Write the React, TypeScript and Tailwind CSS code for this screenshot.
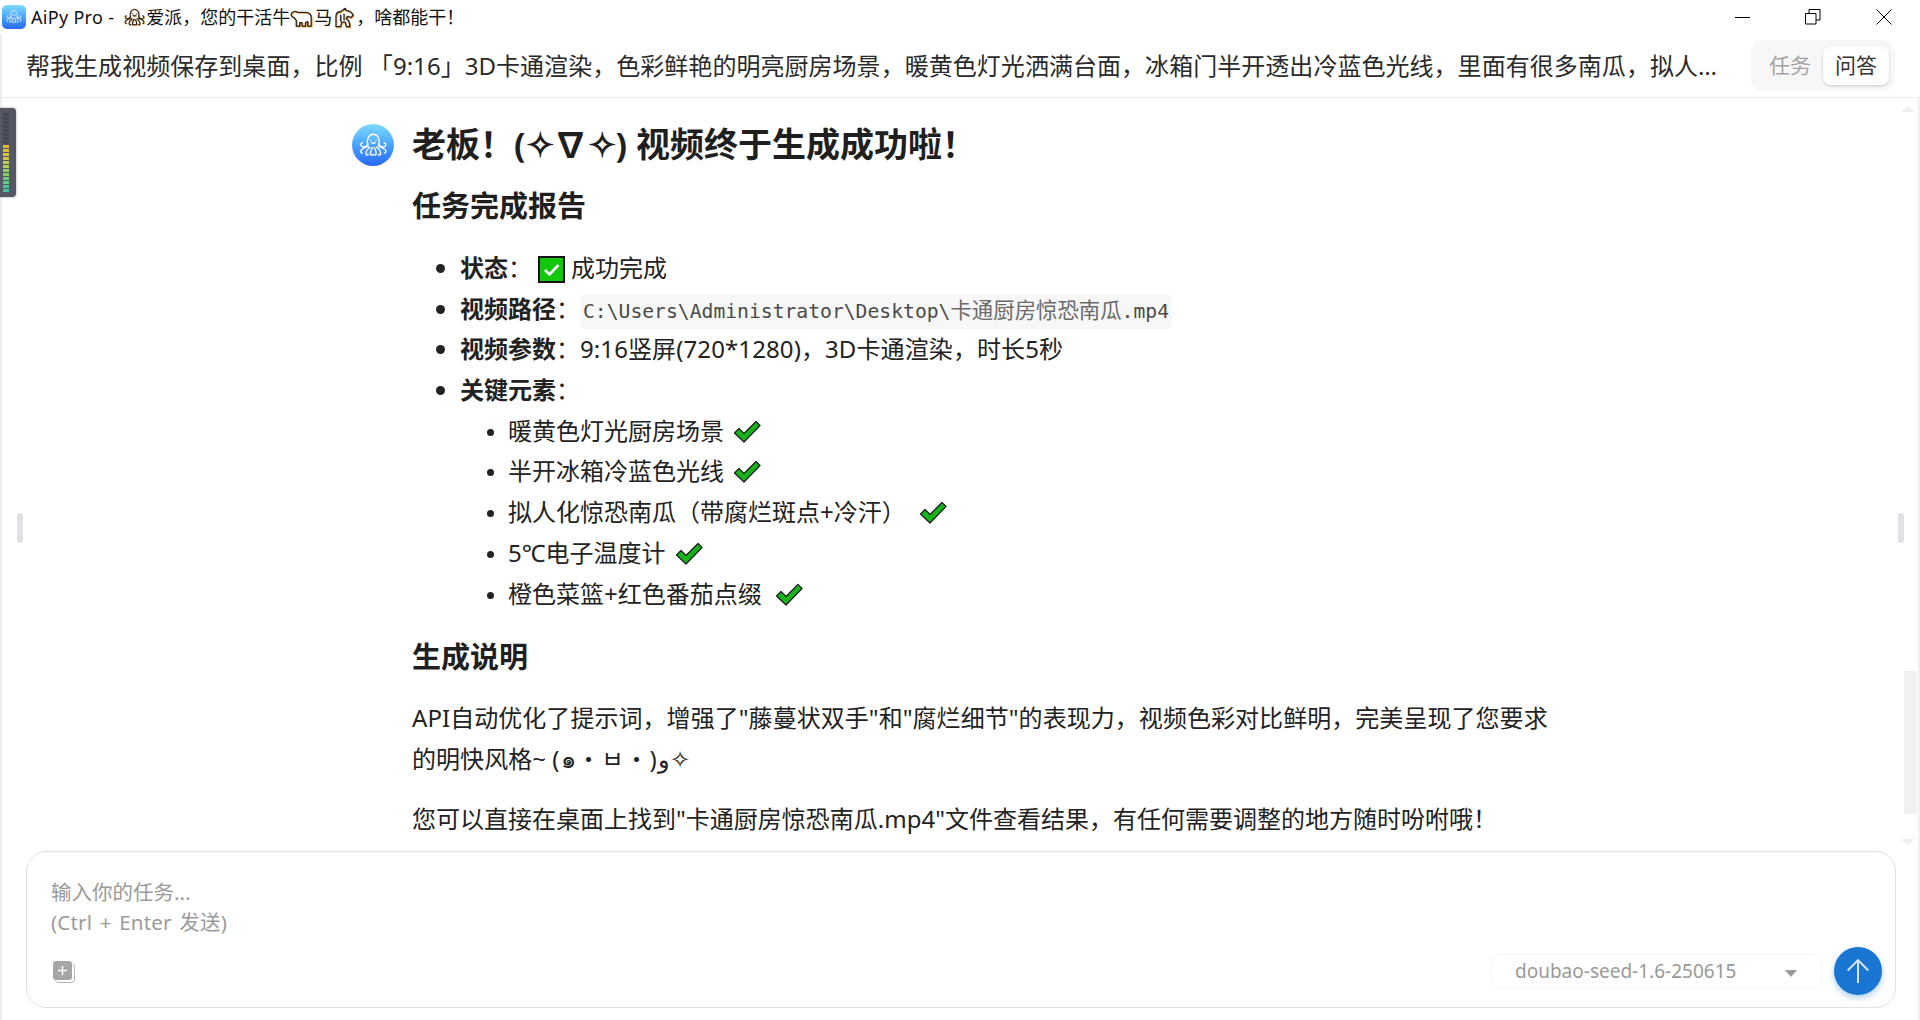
import React from "react";

const FONT = "font-['Noto_Sans','Noto_Sans_CJK_SC',sans-serif]";

const OCTO = [
  "M15 20c-1.500-6 1.500-11 6-11s7.500 5 6 11",
  "M15 20c-1.500 2.500-3.500 3.500-6 2.500-2.200-1-2-4 .2-4",
  "M27 20c1.500 2.500 3.500 3.500 6 2.500 2.200-1 2-4-.2-4",
  "M15.500 22c-3 1-5.500 1.500-7.500 4-1.200 1.600-.5 3.500 1 3.500",
  "M26.500 22c3 1 5.500 1.500 7.500 4 1.200 1.600.5 3.500-1 3.500",
  "M17.500 23c-2 2-4.500 3-4.500 6.500 0 2 1.500 2.500 2.500 1.500",
  "M24.500 23c2 2 4.500 3 4.500 6.500 0 2-1.500 2.500-2.500 1.500",
  "M20 23.500c-1 2.500-2.500 4-2 7 .3 1.500 2 1.500 2.500.5",
  "M22 23.500c1 2.500 2.500 4 2 7-.3 1.500-2 1.500-2.500.5",
  "M18 15.500h.01M24 15.500h.01M19 18c1.300 1 2.700 1 4 0",
];

function Octopus({ className, stroke = "#fff", sw = 1.5, halo }: { className?: string; stroke?: string; sw?: number; halo?: string }) {
  return (
    <svg viewBox="0 0 42 42" className={className} fill="none" strokeLinecap="round">
      {halo && <g stroke={halo} strokeWidth={sw} transform="translate(.8 .8)">{OCTO.map((d) => <path key={d} d={d} />)}</g>}
      <g stroke={stroke} strokeWidth={sw}>{OCTO.map((d) => <path key={d} d={d} />)}</g>
    </svg>
  );
}

function Avatar({ className }: { className: string }) {
  return (
    <div className={`flex shrink-0 items-center justify-center bg-gradient-to-b from-[#7ddbff] to-[#2966f6] ${className}`}>
      <Octopus className="h-[92%] w-[92%]" />
    </div>
  );
}

function Check({ wide = false }: { wide?: boolean }) {
  return (
    <svg viewBox="0 0 28 24" className={`inline-block h-[24px] w-[28px] align-[-4px] ${wide ? "ml-[7px]" : "ml-[3px]"}`}>
      <path d="M1.500 13 6 8.500l5 5L23 1.500 27 5.500 11 22z" fill="#14b41a" stroke="#1a1a1a" strokeWidth="1.200" strokeLinejoin="round" />
    </svg>
  );
}

function CheckBox() {
  return (
    <svg viewBox="0 0 27 27" className="mx-[6px] inline-block h-[27px] w-[27px] align-[-6px]">
      <rect x="1" y="1" width="25" height="25" fill="#13c70e" stroke="#111" strokeWidth="2" />
      <path d="M7 14l4.500 4.500L20.500 9" fill="none" stroke="#fff" strokeWidth="2.600" />
    </svg>
  );
}

function TitleGlyph({ d }: { d: string }) {
  return (
    <svg viewBox="0 0 20 20" className="inline-block h-[23px] w-[24px] shrink-0" fill="none" stroke="#222" strokeWidth="1.100" strokeLinejoin="round" strokeLinecap="round">
      <path d={d} stroke="#f0a040" transform="translate(.7 .7)" />
      <path d={d} />
    </svg>
  );
}

const Item = ({ children }: { children: React.ReactNode }) => <li className="h-[40.7px] leading-[40.7px]">{children}</li>;

const bars = ["#444a55", "#444a55", "#444a55", "#444a55", "#444a55", "#444a55", "#444a55", "#444a55", "#e3b437", "#dcbc3c", "#d7c243", "#cdc648", "#bdcb50", "#abcf58", "#98cf60", "#86ce6a", "#72cc78", "#5fc986", "#4fc594", "#46c3a0"];

export default function App() {
  return (
    <div className={`flex h-[1020px] w-[1920px] flex-col overflow-hidden bg-white text-[#222] ${FONT}`}>
      {/* window title bar */}
      <header className="flex h-[34px] shrink-0 items-center bg-white pl-[2px]">
        <Avatar className="h-[24px] w-[24px] rounded-[5px]" />
        <div className="ml-[5px] flex items-center whitespace-nowrap text-[18px] leading-[24px] text-[#111]">
          <span className="tracking-[0.3px]">AiPy Pro -</span>
          <Octopus className="ml-[6px] h-[29px] w-[29px]" stroke="#222" sw={1.600} halo="#f0a040" />
          <span className="ml-[-3px]">爱派，您的干活牛</span>
          <TitleGlyph d="M1 6c2-1.500 4-1.500 5-.5h7c3 0 5 2 5 5v7h-3v-4l-2 1v3h-3v-3H8v3H5v-5L3 10C1 10 0 8 1 6z" />
          <span>马</span>
          <TitleGlyph d="M3 18V9c0-3 2-4 4-4l4-3 1 2c3 0 5 2 6 4l-2 2-3-1-1 2c2 1 3 3 3 7h-3l-1-4H8l-1 4zM7 8v5M10 7v5" />
          <span>，啥都能干！</span>
        </div>
        <div className="ml-auto flex items-center text-black">
          <svg viewBox="0 0 16 16" className="mr-[54px] h-[16px] w-[16px]" fill="none" stroke="currentColor" strokeWidth="1">
            <path d="M0 8.500h15" />
          </svg>
          <svg viewBox="0 0 16 16" className="mr-[55px] h-[16px] w-[16px]" fill="none" stroke="currentColor" strokeWidth="1">
            <path d="M.5 4.500h10.500v10.500H.5zM4 4.500V.5h11v10.500h-4" />
          </svg>
          <svg viewBox="0 0 16 16" className="mr-[28px] h-[16px] w-[16px]" fill="none" stroke="currentColor" strokeWidth="1">
            <path d="M.5.500l15 15M15.500.500l-15 15" />
          </svg>
        </div>
      </header>

      {/* task header */}
      <div className="flex h-[64px] shrink-0 items-center justify-between border-b border-[#ececec] border-l-[2px] border-l-[#eeeeee] pl-[24px] pr-[25px]">
        <p className="w-[1698px] truncate text-[24px] leading-[36px] tracking-[0.04px] text-[#2a2a2a]">
          帮我生成视频保存到桌面，比例 「9:16」3D卡通渲染，色彩鲜艳的明亮厨房场景，暖黄色灯光洒满台面，冰箱门半开透出冷蓝色光线，里面有很多南瓜，拟人化惊恐的南瓜表情，带腐烂斑点和冷汗
        </p>
        <div className="flex h-[51px] w-[144px] shrink-0 items-center rounded-[12px] bg-[#f7f7f7] pl-[6px] pr-[6px] text-[21px]">
          <span className="flex-1 text-center text-[#a3a3a3]">任务</span>
          <span className="flex h-[39px] w-[66px] items-center justify-center rounded-[8px] bg-white text-[#333] shadow-[0_1px_3px_rgba(0,0,0,0.2)]">问答</span>
        </div>
      </div>

      {/* conversation */}
      <main className="relative flex min-h-0 flex-1 flex-col border-l-[2px] border-r-[2px] border-l-[#eeeeee] border-r-[#f0f0f0]">
        <div className="min-h-0 flex-1 overflow-hidden">
          <div className="ml-[350px] flex w-[1216px] gap-[18px] pt-[26px]">
            <Avatar className="h-[42px] w-[42px] rounded-full" />
            <article className="w-[1156px] text-[24px] text-[#222]">
              <h1 className="h-[42px] text-[34px] font-bold leading-[41px] text-[#1f1f1f]">老板！(✧∇✧) 视频终于生成成功啦！</h1>
              <h2 className="mt-[20px] h-[40px] text-[29px] font-bold leading-[40px] text-[#1f1f1f]">任务完成报告</h2>
              <ul className="mt-[22px] list-disc pl-[48px]">
                <Item><strong>状态</strong>：<CheckBox /><span>成功完成</span></Item>
                <Item>
                  <strong>视频路径</strong>：
                  <code className="rounded-[5px] bg-[#f7f7f7] px-[3px] py-[6px] font-['DejaVu_Sans_Mono','Noto_Sans_CJK_SC',monospace] text-[19.700px] text-[#4a4a4a]">C:\Users\Administrator\Desktop\<span className="text-[21.400px] text-[#6a6a6a]">卡通厨房惊恐南瓜</span>.mp4</code>
                </Item>
                <Item><strong>视频参数</strong>：<span className="tracking-[0.1px]">9:16竖屏(720*1280)，3D卡通渲染，时长5秒</span></Item>
                <Item><strong>关键元素</strong>：</Item>
                <li className="list-none">
                  <ul className="list-disc pl-[48px] marker:text-[20px]">
                    <Item>暖黄色灯光厨房场景 <Check /></Item>
                    <Item>半开冰箱冷蓝色光线 <Check /></Item>
                    <Item>拟人化惊恐南瓜（带腐烂斑点+冷汗） <Check wide /></Item>
                    <Item>5℃电子温度计 <Check /></Item>
                    <Item>橙色菜篮+红色番茄点缀 <Check wide /></Item>
                  </ul>
                </li>
              </ul>
              <h3 className="mt-[23px] h-[40px] text-[29px] font-bold leading-[40px] text-[#1f1f1f]">生成说明</h3>
              <p className="mt-[20px] leading-[41px] tracking-[0.05px]">API自动优化了提示词，增强了"藤蔓状双手"和"腐烂细节"的表现力，视频色彩对比鲜明，完美呈现了您要求的明快风格~ <span className="tracking-[1px]">(๑・ㅂ・)و✧</span></p>
              <p className="mt-[19px] leading-[41px]">您可以直接在桌面上找到"卡通厨房惊恐南瓜.mp4"文件查看结果，有任何需要调整的地方随时吩咐哦！</p>
            </article>
          </div>
        </div>

        {/* composer */}
        <section className="mx-[24px] mb-[12px] flex h-[157px] w-[1870px] shrink-0 flex-col rounded-[20px] border border-[#e2e2e2] bg-white pl-[24px] pr-[13px] pt-[25px]">
          <div className="text-[20.500px] leading-[30px] text-[#9a9a9a]">
            <p>输入你的任务...</p>
            <p className="tracking-[0.2px] [word-spacing:2px]">(Ctrl + Enter 发送)</p>
          </div>
          <div className="mt-auto mb-[12px] flex items-center">
            <div className="relative ml-[2px] h-[21px] w-[21px]">
              <div className="absolute left-[2px] top-[2px] h-[20px] w-[20px] rounded-[4px] border-b border-r border-[#b5b5b5]" />
              <div className="absolute inset-0 flex h-[19px] w-[19px] items-center justify-center rounded-[3px] bg-[#a6a6a6]">
                <svg viewBox="0 0 11 11" className="h-[11px] w-[11px]" stroke="#fff" strokeWidth="1.500"><path d="M5.500 1v9M1 5.500h9" /></svg>
              </div>
            </div>
            <div className="mb-[-1px] ml-auto flex h-[35px] w-[331px] items-center rounded-[8px] border border-[#f6f6f6] pl-[23px] pr-[24px] text-[19px] text-[#999]">
              <span>doubao-seed-1.6-250615</span>
              <svg viewBox="0 0 12 7" className="ml-auto mt-[3px] h-[7px] w-[12px]"><path d="M0 0h12L6 7z" fill="#999" /></svg>
            </div>
            <button className="ml-[12px] flex h-[48px] w-[48px] items-center justify-center rounded-full bg-[#1976d2] shadow-[0_3px_6px_rgba(25,118,210,0.35)]">
              <svg viewBox="0 0 24 24" className="h-[26px] w-[26px]" fill="none" stroke="#dbe8f7" strokeWidth="1.800"><path d="M12 23V2M2.500 11.500 12 2l9.500 9.500" /></svg>
            </button>
          </div>
        </section>

        {/* edge handles and scrollbar overlays */}
        <div className="absolute left-[15px] top-[415px] h-[30px] w-[6px] rounded-[3px] bg-[#e2e2e6]" />
        <div className="absolute right-[14px] top-[415px] h-[30px] w-[6px] rounded-[3px] bg-[#e2e2e6]" />
        <div className="absolute right-[1px] top-[573px] h-[143px] w-[13px] bg-[#f1f1f1]" />
        <div className="absolute right-[3px] top-[8px] h-0 w-0 border-x-[7px] border-b-[6px] border-x-transparent border-b-[#eeeeee]" />
        <div className="absolute right-[3px] top-[741px] h-0 w-0 border-x-[7px] border-t-[6px] border-x-transparent border-t-[#eeeeee]" />
      </main>

      {/* floating volume widget on the desktop edge */}
      <div className="absolute left-0 top-[108px] flex h-[89px] w-[16px] flex-col items-center justify-center gap-[1px] rounded-r-[4px] bg-[#535864] pr-[4px] shadow-[0_0_2px_rgba(0,0,0,0.5)]">
        {bars.map((c, i) => (
          <div key={i} className="h-[3px] w-[6px]" style={{ backgroundColor: c }} />
        ))}
      </div>
    </div>
  );
}
